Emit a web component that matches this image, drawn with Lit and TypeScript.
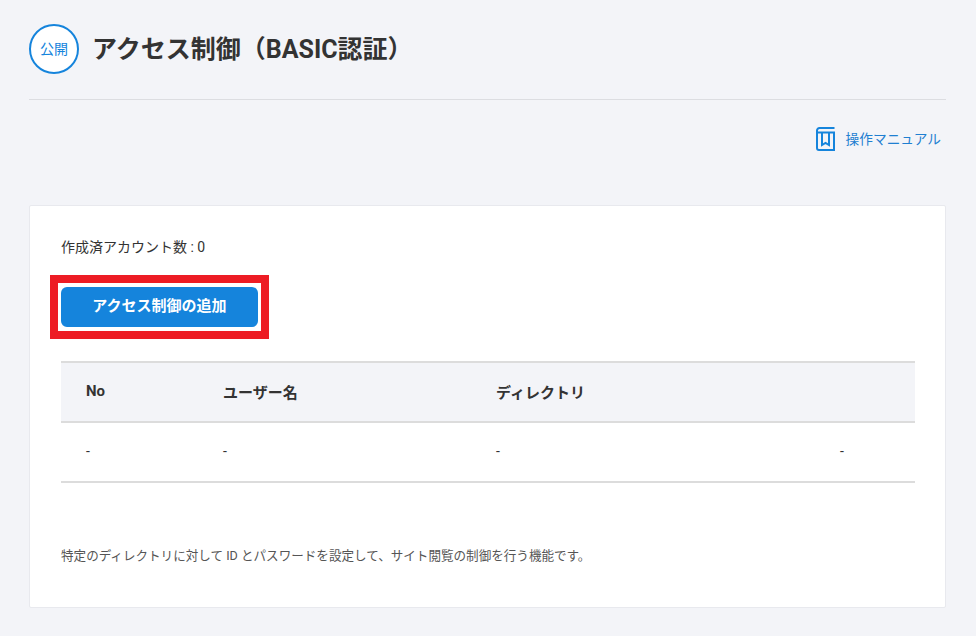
import { LitElement, html, css } from "lit";
import { customElement } from "lit/decorators.js";

@customElement("app-root")
export class AppRoot extends LitElement {
  static styles = css`
    :host {
      display: block;
      box-sizing: border-box;
      height: 636px;
      overflow: hidden;
      background: #f3f4f8;
      padding: 24px 30px 0 29px;
      color: #333;
      font-family: Roboto, "Noto Sans CJK JP", sans-serif;
    }
    .header {
      display: flex;
      align-items: center;
      gap: 13px;
      padding-bottom: 25px;
      border-bottom: 1px solid #dcdde1;
    }
    .badge {
      box-sizing: border-box;
      width: 50px;
      height: 50px;
      border: 2px solid #1584dc;
      border-radius: 50%;
      background: #fff;
      color: #1584dc;
      font-size: 14px;
      padding-bottom: 3px;
      display: flex;
      align-items: center;
      justify-content: center;
    }
    h1 {
      margin: 2px 0 0;
      font-size: 25px;
      line-height: 48px;
      font-weight: 700;
      color: #333;
    }
    .manual-row {
      display: flex;
      justify-content: flex-end;
      padding: 27px 5px 0 0;
      height: 105px;
      box-sizing: border-box;
    }
    .manual {
      display: flex;
      align-items: flex-start;
      gap: 11px;
      color: #1f7fd1;
      font-size: 13.7px;
      line-height: 24px;
      text-decoration: none;
    }
    .manual svg {
      display: block;
    }
    .card {
      box-sizing: border-box;
      height: 403px;
      background: #fff;
      border: 1px solid #e8e9ee;
      border-radius: 2px;
      padding: 31px 30px 0 31px;
    }
    .count {
      font-size: 14px;
      line-height: 20px;
      color: #333;
    }
    .action {
      position: relative;
      width: 197px;
      margin-top: 30px;
    }
    .btn {
      display: block;
      box-sizing: border-box;
      width: 197px;
      height: 40px;
      border: 0;
      border-radius: 6px;
      background: #1584dc;
      color: #fff;
      font: 700 15px/38px Roboto, "Noto Sans CJK JP", sans-serif;
      padding: 0 0 2px;
      text-align: center;
    }
    .mark {
      position: absolute;
      inset: -12px -11px;
      border: 8px solid #ed1c24;
      pointer-events: none;
    }
    table {
      width: 854px;
      margin-top: 34px;
      border-collapse: collapse;
      table-layout: fixed;
      font-size: 15px;
    }
    th,
    td {
      padding: 0 0 2px 25px;
      text-align: left;
      height: 56px;
      box-sizing: content-box;
    }
    tr {
      border-top: 2px solid #dcdcdc;
      border-bottom: 2px solid #dcdcdc;
    }
    th {
      background: #f3f4f8;
      font-weight: 700;
      color: #333;
    }
    td {
      font-size: 14px;
      color: #333;
    }
    .note {
      margin: 63px 0 0;
      font-size: 12.57px;
      line-height: 20px;
      color: #555;
    }
  `;

  render() {
    return html`
      <div class="header">
        <div class="badge">公開</div>
        <h1>アクセス制御（BASIC認証）</h1>
      </div>
      <div class="manual-row">
        <a class="manual">
          <svg width="19" height="24" viewBox="0 0 19 24" fill="none" stroke="#1584dc" stroke-width="2">
            <path d="M18.500 1H3.500A2.500 2.500 0 0 0 1 3.500V21a2 2 0 0 0 2 2h15V5.500H1.500" />
            <path d="M6 5.500V18l3.500-2 3.500 2V5.500" />
          </svg>
          <span>操作マニュアル</span>
        </a>
      </div>
      <section class="card">
        <div class="count">作成済アカウント数 : 0</div>
        <div class="action">
          <button class="btn">アクセス制御の追加</button>
          <div class="mark"></div>
        </div>
        <table>
          <colgroup>
            <col style="width:137px" />
            <col style="width:273px" />
            <col style="width:344px" />
            <col style="width:100px" />
          </colgroup>
          <thead>
            <tr>
              <th>No</th>
              <th>ユーザー名</th>
              <th>ディレクトリ</th>
              <th></th>
            </tr>
          </thead>
          <tbody>
            <tr>
              <td>-</td>
              <td>-</td>
              <td>-</td>
              <td>-</td>
            </tr>
          </tbody>
        </table>
        <p class="note">特定のディレクトリに対して ID とパスワードを設定して、サイト閲覧の制御を行う機能です。</p>
      </section>
    `;
  }
}
